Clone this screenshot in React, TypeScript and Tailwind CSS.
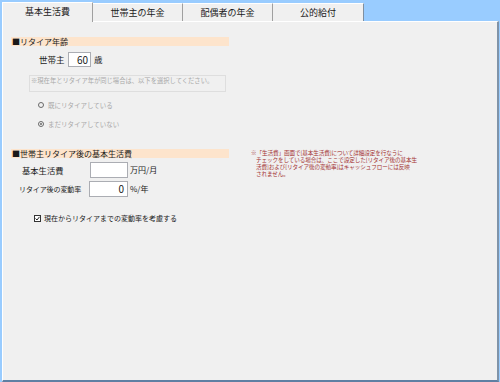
import React from "react";

const tabs = ["基本生活費", "世帯主の年金", "配偶者の年金", "公的給付"];

function Radio({ checked, label }: { checked?: boolean; label: string }) {
  return (
    <div className="flex items-center gap-[4px] h-[8px] ml-[27px]">
      <span className="w-[6px] h-[6px] rounded-full border-[1.5px] border-[#6a6a6a] flex items-center justify-center">
        {checked && <span className="w-[2px] h-[2px] rounded-full bg-[#6a6a6a]" />}
      </span>
      <span className="text-[6.5px] leading-[8px] text-[#a8a8a8]">{label}</span>
    </div>
  );
}

function Header({ text }: { text: string }) {
  return (
    <div className="h-[9px] w-[218px] bg-[#fde4cc] flex items-center">
      <span className="text-[8px] leading-[9px] text-[#1a1a1a] pl-[1px]">{text}</span>
    </div>
  );
}

export default function App() {
  return (
    <div className="w-[500px] h-[382px] bg-[#99ccff] flex flex-col pl-[2px] pr-[1px] font-['Noto_Sans_CJK_JP','Noto_Sans',sans-serif]">
      {/* Tabs */}
      <div className="h-[21px] flex items-end relative z-10">
        {tabs.map((t, i) =>
          i === 0 ? (
            <div
              key={t}
              className="w-[91px] h-[20px] -mb-px bg-[#f0f0f0] border-l border-t border-white border-r border-r-[#a0a0a0] flex items-center justify-center pb-[2px]"
            >
              <span className="text-[9px] leading-[10px] text-[#1a1a1a]">{t}</span>
            </div>
          ) : (
            <div
              key={t}
              className={`${i === 3 ? "w-[91px] border-r-[#7f8fa0]" : "w-[90px] border-r-[#a0a0a0]"} h-[18px] bg-[#f0f0f0] border-t border-white border-r flex items-center justify-center`}
            >
              <span className="text-[9px] leading-[10px] text-[#1a1a1a]">{t}</span>
            </div>
          )
        )}
      </div>

      {/* Panel */}
      <div className="flex-1 bg-[#f0f0f0] border-t border-l border-white border-r-2 border-r-[#7f93a8] border-b-2 border-b-[#5f7fa3] pl-[8px] pt-[15px]">
        <Header text="■リタイア年齢" />

        <div className="mt-[6px] flex items-center h-[15px]">
          <span className="ml-[28px] w-[29px] text-[8.5px] text-[#1a1a1a]">世帯主</span>
          <div className="w-[23px] h-[15px] bg-white border border-[#abadb3] flex items-center justify-end pr-[2px]">
            <span className="text-[10px] leading-[12px] text-[#1a1a1a]">60</span>
          </div>
          <span className="ml-[3px] text-[8.5px] text-[#1a1a1a]">歳</span>
        </div>

        <div className="mt-[8px] ml-[18px] w-[197px] h-[17px] border border-[#dedede] pl-[1px] pt-[1px]">
          <span className="text-[6.3px] leading-[8px] text-[#a8a8a8] block">
            ※現在年とリタイア年が同じ場合は、以下を選択してください。
          </span>
        </div>

        <div className="mt-[9px]">
          <Radio label="既にリタイアしている" />
        </div>
        <div className="mt-[11px]">
          <Radio checked label="まだリタイアしていない" />
        </div>

        <div className="mt-[21px] flex">
          <div className="flex flex-col">
            <Header text="■世帯主リタイア後の基本生活費" />

            <div className="mt-[4px] flex items-center h-[16px]">
              <span className="ml-[11px] w-[68px] text-[8.3px] text-[#1a1a1a]">基本生活費</span>
              <div className="w-[38px] h-[16px] bg-white border border-[#abadb3]" />
              <span className="ml-[2px] text-[8px] text-[#1a1a1a]">万円/月</span>
            </div>

            <div className="mt-[3px] flex items-center h-[16px]">
              <span className="ml-[8px] w-[70px] text-[7px] tracking-[-0.1px] text-[#1a1a1a]">リタイア後の変動率</span>
              <div className="w-[39px] h-[16px] bg-white border border-[#abadb3] flex items-center justify-end pr-[3px]">
                <span className="text-[10px] leading-[12px] text-[#1a1a1a]">0</span>
              </div>
              <span className="ml-[2px] text-[8px] text-[#1a1a1a]">%/年</span>
            </div>

            <div className="mt-[17px] ml-[23px] flex items-center gap-[3px]">
              <span className="w-[7px] h-[7px] border border-[#333] bg-white flex items-center justify-center">
                <svg width="5" height="5" viewBox="0 0 5 5">
                  <path d="M0.5 2.5 L2 4 L4.5 0.8" stroke="#222" strokeWidth="1" fill="none" />
                </svg>
              </span>
              <span className="text-[7px] leading-[9px] text-[#1a1a1a]">現在からリタイアまでの変動率を考慮する</span>
            </div>
          </div>

          <div className="ml-[22px] whitespace-nowrap text-[5.6px] leading-[7px] text-[#a33030] pt-[1px] tracking-[-0.1px]">
            <p>※「生活費」画面で[基本生活費]について詳細設定を行なうに</p>
            <p className="pl-[5px]">チェックをしている場合は、ここで設定した[リタイア後の基本生</p>
            <p className="pl-[5px]">活費]および[リタイア後の変動率]はキャッシュフローには反映</p>
            <p className="pl-[5px]">されません。</p>
          </div>
        </div>
      </div>
    </div>
  );
}
